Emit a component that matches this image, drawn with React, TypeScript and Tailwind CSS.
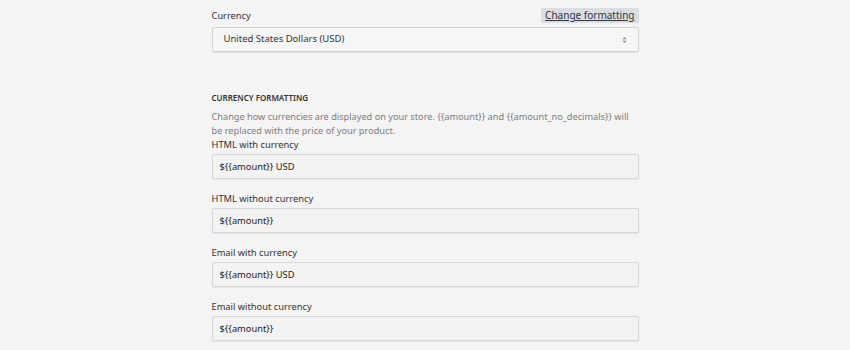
const fields = [
  { label: "HTML with currency", value: "${{amount}} USD" },
  { label: "HTML without currency", value: "${{amount}}" },
  { label: "Email with currency", value: "${{amount}} USD" },
  { label: "Email without currency", value: "${{amount}}" },
];

const help =
  "Change how currencies are displayed on your store. {{amount}} and {{amount_no_decimals}} will be replaced with the price of your product.";

function Field({ label, value, first }: { label: string; value: string; first?: boolean }) {
  return (
    <div className={first ? "" : "mt-[13px]"}>
      <div className="text-[9.3px] leading-[14px] text-[#333]">{label}</div>
      <div className="mt-[2px] h-[25px] border border-[#d6d6d6] rounded-[2px] bg-[#f3f3f3] shadow-[0_1px_1px_rgba(0,0,0,0.06)] flex items-center px-[7px] text-[9.3px] text-[#222]">
        {value}
      </div>
    </div>
  );
}

export default function App() {
  return (
    <div className="min-h-[350px] w-full bg-[#f4f4f4] font-['Noto_Sans',sans-serif]">
      <div className="mx-auto w-[427px] pt-[8px]">
        <div className="flex items-end justify-between">
          <span className="text-[9.3px] leading-[15px] text-[#333]">Currency</span>
          <span className="bg-[#dadde1] px-[4px] text-[10px] leading-[15px] text-[#31373d] underline">
            Change formatting
          </span>
        </div>
        <div className="mt-[4px] h-[25px] border border-[#d3d3d3] rounded-[2px] bg-[#f6f6f6] shadow-[0_1px_1px_rgba(0,0,0,0.08)] flex items-center justify-between pl-[11px] pr-[11px] text-[9.5px] text-[#333]">
          <span>United States Dollars (USD)</span>
          <svg width="5" height="8" viewBox="0 0 6 9" className="text-[#888]">
            <path d="M0.5 3.5 L3 1 L5.5 3.5 Z M0.5 5.5 L3 8 L5.5 5.5 Z" fill="currentColor" />
          </svg>
        </div>

        <div className="mt-[40px] text-[8px] leading-[12px] font-semibold uppercase text-[#333]">
          Currency formatting
        </div>
        <p className="mt-[6px] text-[9.2px] leading-[14px] text-[#7d7d7d]">{help}</p>
        <div>
          {fields.map((f, i) => (
            <Field key={f.label} label={f.label} value={f.value} first={i === 0} />
          ))}
        </div>
      </div>
    </div>
  );
}
